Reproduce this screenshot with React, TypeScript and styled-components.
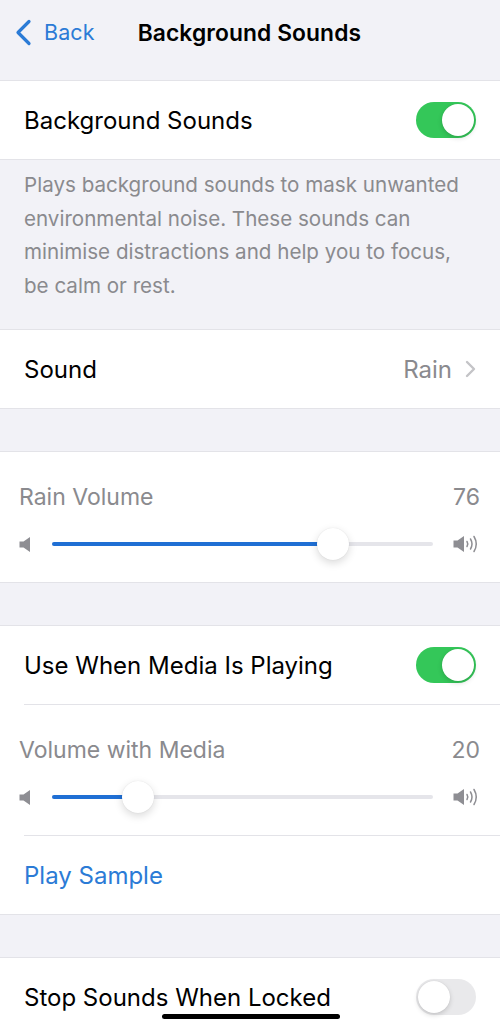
import React from "react";
import styled, { createGlobalStyle } from "styled-components";

const GlobalStyle = createGlobalStyle`
  html, body { margin: 0; padding: 0; background: #f2f2f7; }
  body { font-family: Inter, "Noto Sans", "Liberation Sans", sans-serif; -webkit-font-smoothing: antialiased; }
  * { box-sizing: border-box; }
`;

const Screen = styled.div`
  position: relative;
  width: 500px;
  height: 1029px;
  overflow: hidden;
  background: #f2f2f7;
`;

const NavBar = styled.header`
  height: 80px;
  display: flex;
  align-items: center;
  padding: 0 0 16px 15px;
`;

const BackButton = styled.div`
  display: flex;
  align-items: center;
  gap: 12px;
  color: #2b7bd6;
  font-size: 21.5px;
  letter-spacing: 0.1px;
`;

const Title = styled.h1`
  margin: 0 0 0 43px;
  font-size: 22.8px;
  font-weight: 600;
  color: #000;
  letter-spacing: 0.1px;
`;

const Group = styled.section`
  background: #fff;
  border-top: 1px solid #e3e3e8;
  border-bottom: 1px solid #e3e3e8;
`;

const Gap = styled.div`
  height: 42px;
`;

const Row = styled.div`
  height: 78px;
  display: flex;
  align-items: center;
  justify-content: space-between;
  padding: 0 24px;
  font-size: 24px;
  color: #000;
`;

const LinkRow = styled(Row)`
  color: #2b7bd6;
`;

const Separator = styled.div`
  height: 1px;
  margin-left: 24px;
  background: #e3e3e8;
`;

const Footer = styled.p`
  margin: 0;
  padding: 8px 24px 27px 24px;
  font-size: 20.6px;
  line-height: 33.5px;
  color: #8a8a8e;
`;

const Value = styled.div`
  display: flex;
  align-items: center;
  gap: 13px;
  color: #8a8a8e;
`;

const Track = styled.div<{ $on: boolean }>`
  position: relative;
  width: 60px;
  height: 36px;
  border-radius: 18px;
  background: ${(p) => (p.$on ? "#34c759" : "#e9e9eb")};
  flex-shrink: 0;
`;

const Knob = styled.div<{ $on: boolean }>`
  position: absolute;
  top: 2px;
  left: ${(p) => (p.$on ? "26px" : "2px")};
  width: 32px;
  height: 32px;
  border-radius: 50%;
  background: #fff;
  box-shadow: 0 2px 5px rgba(0, 0, 0, 0.16), 0 0 1px rgba(0, 0, 0, 0.1);
`;

const SliderCell = styled.div`
  padding: 30px 20px 22px 19px;
  display: flex;
  flex-direction: column;
  gap: 16px;
`;

const SliderLabel = styled.div`
  height: 30px;
  display: flex;
  align-items: center;
  justify-content: space-between;
  font-size: 23px;
  color: #8a8a8e;
`;

const SliderRow = styled.div`
  height: 32px;
  display: flex;
  align-items: center;
  gap: 20px;
`;

const SliderTrack = styled.div`
  position: relative;
  flex: 1;
  height: 4px;
  border-radius: 2px;
  background: #e5e5ea;
`;

const SliderFill = styled.div`
  position: absolute;
  left: 0;
  top: 0;
  bottom: 0;
  border-radius: 2px;
  background: #1f6fd4;
`;

const SliderThumb = styled.div`
  position: absolute;
  top: 50%;
  width: 32px;
  height: 32px;
  margin-top: -16px;
  border-radius: 50%;
  background: #fff;
  box-shadow: 0 3px 8px rgba(0, 0, 0, 0.15), 0 0 1px rgba(0, 0, 0, 0.12);
`;

const HomeIndicator = styled.div`
  position: absolute;
  left: 162px;
  top: 1014px;
  width: 178px;
  height: 5px;
  border-radius: 3px;
  background: #000;
`;

const Toggle = ({ on }: { on: boolean }) => (
  <Track $on={on}>
    <Knob $on={on} />
  </Track>
);

const SpeakerLow = () => (
  <svg width="13" height="17" viewBox="0 0 13 17">
    <path d="M0.5 5.5h4L11 1v15L4.5 11.5h-4z" fill="#8e8e93" />
  </svg>
);

const SpeakerHigh = () => (
  <svg width="27" height="20" viewBox="0 0 27 20">
    <path d="M0.5 6.5h4L11 2v16L4.5 13.5h-4z" fill="#8e8e93" />
    <path d="M14 7.5q1.6 2.5 0 5" stroke="#8e8e93" strokeWidth="1.5" fill="none" strokeLinecap="round" />
    <path d="M17.5 5q3 5 0 10" stroke="#8e8e93" strokeWidth="1.5" fill="none" strokeLinecap="round" />
    <path d="M21 2.5q4.5 7.5 0 15" stroke="#8e8e93" strokeWidth="1.5" fill="none" strokeLinecap="round" />
  </svg>
);

const Slider = ({ label, value }: { label: string; value: number }) => {
  const pct = value / 100;
  return (
    <SliderCell>
      <SliderLabel>
        <span>{label}</span>
        <span>{value}</span>
      </SliderLabel>
      <SliderRow>
        <SpeakerLow />
        <SliderTrack>
          <SliderFill style={{ width: `calc(16px + ${pct} * (100% - 32px))` }} />
          <SliderThumb style={{ left: `calc(${pct} * (100% - 32px))` }} />
        </SliderTrack>
        <SpeakerHigh />
      </SliderRow>
    </SliderCell>
  );
};

export default function App() {
  return (
    <>
      <GlobalStyle />
      <Screen>
        <NavBar>
          <BackButton>
            <svg width="17" height="27" viewBox="0 0 17 27">
              <path d="M14 2.5L3 13.5l11 11" stroke="#2b7bd6" strokeWidth="3.2" fill="none" strokeLinecap="round" strokeLinejoin="round" />
            </svg>
            <span>Back</span>
          </BackButton>
          <Title>Background Sounds</Title>
        </NavBar>

        <Group>
          <Row>
            <span>Background Sounds</span>
            <Toggle on />
          </Row>
        </Group>
        <Footer>
          Plays background sounds to mask unwanted environmental noise. These sounds can minimise distractions and help you to focus, be calm or rest.
        </Footer>

        <Group>
          <Row>
            <span>Sound</span>
            <Value>
              <span>Rain</span>
              <svg width="11" height="18" viewBox="0 0 11 18">
                <path d="M2 2l7 7-7 7" stroke="#c4c4c7" strokeWidth="2.4" fill="none" strokeLinecap="round" strokeLinejoin="round" />
              </svg>
            </Value>
          </Row>
        </Group>
        <Gap />

        <Group>
          <Slider label="Rain Volume" value={76} />
        </Group>
        <Gap />

        <Group>
          <Row>
            <span>Use When Media Is Playing</span>
            <Toggle on />
          </Row>
          <Separator />
          <Slider label="Volume with Media" value={20} />
          <Separator />
          <LinkRow>Play Sample</LinkRow>
        </Group>
        <Gap />

        <Group>
          <Row>
            <span>Stop Sounds When Locked</span>
            <Toggle on={false} />
          </Row>
        </Group>

        <HomeIndicator />
      </Screen>
    </>
  );
}
